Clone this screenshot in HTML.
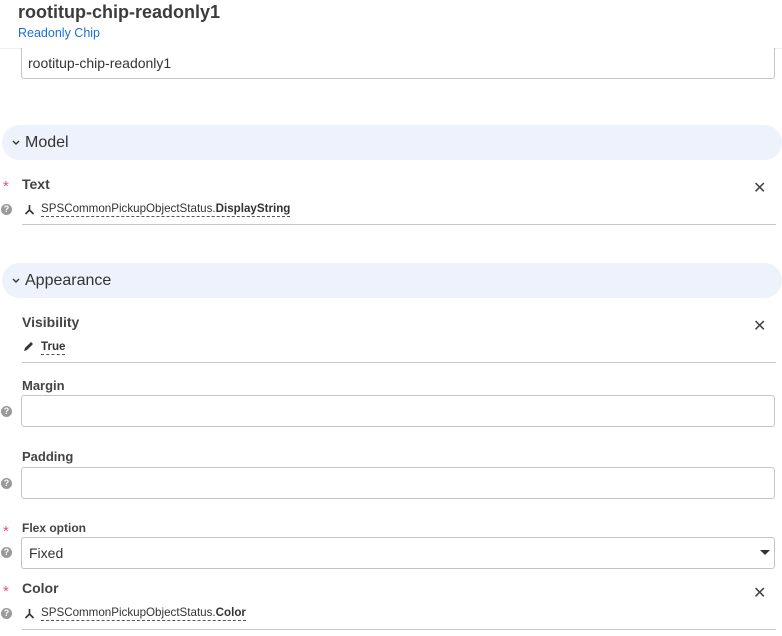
<!DOCTYPE html>
<html><head><style>
body{margin:0;width:782px;height:636px;overflow:hidden;background:#fff;font-family:"Liberation Sans",sans-serif;color:#333;position:relative}
.a{position:absolute}
.lbl{position:absolute;left:22px;font-size:13px;font-weight:bold;color:#444}
.star{position:absolute;left:3px;color:#e8527a;font-size:15px}
.q{position:absolute;left:1px;width:11px;height:11px;border-radius:50%;background:#9a9a9a;color:#fff;font-size:9px;font-weight:bold;text-align:center;line-height:11px}
.inp{position:absolute;left:21px;width:752px;border:1px solid #c4c4c4;border-radius:3px;background:#fff}
.band{position:absolute;left:2px;width:780px;height:35px;background:#edf2fc;border-radius:18px;font-size:16px;color:#333}
.band span{position:absolute;left:23px;top:9px}
.band svg{position:absolute;left:10px;top:15px}
.ul{position:absolute;left:22px;width:754px;height:1px;background:#c8c8c8}
.x{position:absolute;left:753px;font-size:16px;color:#444}
.bind{position:absolute;left:41px;font-size:11.6px;color:#333;border-bottom:1px dashed #555;line-height:14px}
</style></head><body>
<div class="a" style="left:18px;top:2px;font-size:18px;font-weight:bold;color:#3c3c3c">rootitup-chip-readonly1</div>
<div class="a" style="left:18px;top:26px;font-size:12.5px;color:#1a6fd6">Readonly Chip</div>
<div class="a" style="left:0;top:48px;width:782px;height:1px;background:#eceef2"></div>
<div class="inp" style="top:48px;height:30px;border-top:none;border-radius:0 0 3px 3px"><span class="a" style="left:6px;top:7px;font-size:14px">rootitup-chip-readonly1</span></div>

<div class="band" style="top:125px"><svg width="8" height="5"><path d="M1 1l3 3 3-3" stroke="#333" stroke-width="1.4" fill="none"/></svg><span>Model</span></div>
<div class="star" style="top:178px">*</div>
<div class="lbl" style="top:176px;font-size:14px">Text</div>
<div class="x" style="top:178px">✕</div>
<div class="q" style="top:204px">?</div>
<svg class="a" style="left:24px;top:204px" width="11" height="11" viewBox="0 0 11 11"><path d="M5.5 1v5M5.5 6L1.5 10M5.5 6L9.5 10" stroke="#333" stroke-width="1.6" fill="none"/></svg>
<div class="bind" style="top:202px">SPSCommonPickupObjectStatus.<b>DisplayString</b></div>
<div class="ul" style="top:224px"></div>

<div class="band" style="top:263px"><svg width="8" height="5"><path d="M1 1l3 3 3-3" stroke="#333" stroke-width="1.4" fill="none"/></svg><span>Appearance</span></div>
<div class="lbl" style="top:314px;font-size:14px">Visibility</div>
<div class="x" style="top:316px">✕</div>
<svg class="a" style="left:23px;top:341px" width="11" height="11" viewBox="0 0 11 11"><path d="M1 10l1-3 6-6 2 2-6 6z" fill="#333"/></svg>
<div class="bind" style="top:340px"><b>True</b></div>
<div class="ul" style="top:362px"></div>

<div class="lbl" style="top:378px">Margin</div>
<div class="q" style="top:406px">?</div>
<div class="inp" style="top:395px;height:30px"></div>

<div class="lbl" style="top:449px">Padding</div>
<div class="q" style="top:478px">?</div>
<div class="inp" style="top:467px;height:30px"></div>

<div class="star" style="top:523px">*</div>
<div class="lbl" style="top:521px;font-size:12px">Flex option</div>
<div class="q" style="top:547px">?</div>
<div class="inp" style="top:537px;height:30px"><span class="a" style="left:7px;top:7px;font-size:14px">Fixed</span>
<svg class="a" style="left:738px;top:12px" width="10" height="6"><path d="M0 0h10L5 5z" fill="#333"/></svg></div>

<div class="star" style="top:583px">*</div>
<div class="lbl" style="top:580px;font-size:14px">Color</div>
<div class="x" style="top:583px">✕</div>
<div class="q" style="top:608px">?</div>
<svg class="a" style="left:24px;top:608px" width="11" height="11" viewBox="0 0 11 11"><path d="M5.5 1v5M5.5 6L1.5 10M5.5 6L9.5 10" stroke="#333" stroke-width="1.6" fill="none"/></svg>
<div class="bind" style="top:606px">SPSCommonPickupObjectStatus.<b>Color</b></div>
<div class="ul" style="top:629px"></div>
</body></html>
